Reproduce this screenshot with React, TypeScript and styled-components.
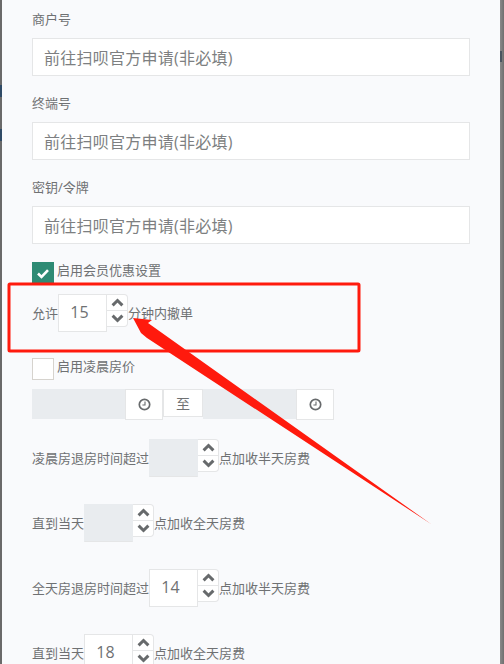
import * as React from "react"
import styled, { createGlobalStyle } from "styled-components"

const GlobalStyle = createGlobalStyle`
  html, body {
    margin: 0;
    height: 664px;
    overflow: hidden;
  }

  body {
    background:
      linear-gradient(#2f4a66, #2f4a66) 0 85px / 2px 12px no-repeat,
      linear-gradient(#2f4a66, #2f4a66) 0 129px / 2px 12px no-repeat,
      linear-gradient(#4a5560, #4a5560) 500px 51px / 2px 11px no-repeat,
      linear-gradient(90deg, #6a6a6a 0 2px, #8a8a8a 500px, #6f6f6f 504px);
    font-family: "Open Sans", "Noto Sans CJK SC", sans-serif;
    color: #6f7173;
  }
`

const Panel = styled.div`
  position: relative;
  box-sizing: border-box;
  width: 498px;
  height: 664px;
  margin-left: 2px;
  padding: 10px 30px 0;
  background: #f9fafc;
  overflow: hidden;
`

const Field = styled.div`
  margin-bottom: 18px;
`

const Label = styled.div`
  font-size: 13px;
  line-height: 18px;
  margin-bottom: 10px;
`

const TextInput = styled.div`
  box-sizing: border-box;
  width: 438px;
  height: 38px;
  padding: 0 11px;
  display: flex;
  align-items: center;
  background: #fff;
  border: 1px solid #e5e6e7;
  font-size: 16px;
  letter-spacing: 0.25px;
  color: #7d7f81;
`

const CheckRow = styled.div<{ $gap: number }>`
  display: flex;
  align-items: flex-start;
  gap: 3px;
  height: 22px;
  margin-bottom: ${(p) => p.$gap}px;
  font-size: 13px;
  line-height: 16px;
`

const CheckBox = styled.div<{ $on?: boolean }>`
  box-sizing: border-box;
  width: 22px;
  height: 22px;
  display: flex;
  align-items: center;
  justify-content: center;
  background: ${(p) => (p.$on ? "#2e8b74" : "#fff")};
  border: 1px solid ${(p) => (p.$on ? "#2e8b74" : "#d6d3ce")};
`

const NumberRow = styled.div<{ $gap: number }>`
  display: flex;
  align-items: flex-start;
  height: 38px;
  margin-bottom: ${(p) => p.$gap}px;
  font-size: 13px;
  line-height: 38px;
  white-space: nowrap;
`

const NumberBox = styled.div<{ $disabled?: boolean }>`
  box-sizing: border-box;
  width: 49px;
  height: 38px;
  background: ${(p) => (p.$disabled ? "#e9ecef" : "#fff")};
  border: 1px solid #e5e6e7;
  border-top-color: ${(p) => (p.$disabled ? "#e9ecef" : "#e5e6e7")};
  border-left-color: ${(p) => (p.$disabled ? "#e9ecef" : "#e5e6e7")};
  border-right-color: ${(p) => (p.$disabled ? "#e9ecef" : "#e5e6e7")};
  text-align: center;
  font-size: 16px;
  line-height: 34px;
  padding-right: 6px;
`

const Spinner = styled.div`
  box-sizing: border-box;
  width: 21px;
  height: 33px;
  display: flex;
  flex-direction: column;
  background: #fff;
  border: 1px solid #e5e6e7;
  border-left: none;
  border-radius: 0 4px 4px 0;
`

const SpinButton = styled.div`
  flex: 1;
  display: flex;
  align-items: center;
  justify-content: center;

  & + & {
    border-top: 1px solid #e5e6e7;
  }
`

const TimeRow = styled.div`
  display: flex;
  align-items: flex-start;
  height: 31px;
  margin-bottom: 19px;
`

const TimeInput = styled.div`
  width: 93px;
  height: 30px;
  background: #e9ecef;
`

const ClockButton = styled.div`
  box-sizing: border-box;
  width: 38px;
  height: 31px;
  display: flex;
  align-items: center;
  justify-content: center;
  background: #fff;
  border: 1px solid #e5e6e7;
`

const ToLabel = styled.div`
  box-sizing: border-box;
  width: 40px;
  height: 28px;
  display: flex;
  align-items: center;
  justify-content: center;
  background: #fff;
  border: 1px solid #e5e6e7;
  font-size: 14px;
`

const Annotation = styled.svg`
  position: absolute;
  left: -2px;
  top: 0;
  pointer-events: none;
`

const Chevron = ({ up }: { up?: boolean }) => (
  <svg width="13" height="9" viewBox="0 0 13 9">
    <path
      d={up ? "M1.6 7.4l4.9-4.9 4.9 4.9" : "M1.6 1.6l4.9 4.9 4.9-4.9"}
      fill="none"
      stroke="#676a6c"
      strokeWidth="3"
    />
  </svg>
)

const Clock = () => (
  <svg width="13" height="13" viewBox="0 0 13 13">
    <circle cx="6.5" cy="6.5" r="5.2" fill="none" stroke="#676a6c" strokeWidth="1.7" />
    <path d="M7 3.4V7H4.4" fill="none" stroke="#676a6c" strokeWidth="1.1" />
  </svg>
)

const NumberInput = ({ value }: { value?: string }) => (
  <>
    <NumberBox $disabled={!value}>{value}</NumberBox>
    <Spinner>
      <SpinButton>
        <Chevron up />
      </SpinButton>
      <SpinButton>
        <Chevron />
      </SpinButton>
    </Spinner>
  </>
)

const placeholder = "前往扫呗官方申请(非必填)"

const App = () => (
  <>
    <GlobalStyle />
    <Panel>
      <Field>
        <Label>商户号</Label>
        <TextInput>{placeholder}</TextInput>
      </Field>
      <Field>
        <Label>终端号</Label>
        <TextInput>{placeholder}</TextInput>
      </Field>
      <Field>
        <Label>密钥/令牌</Label>
        <TextInput>{placeholder}</TextInput>
      </Field>
      <CheckRow $gap={10}>
        <CheckBox $on>
          <svg width="14" height="11" viewBox="0 0 14 11">
            <path d="M2 5.5l3.5 3.5L12 2.2" fill="none" stroke="#fff" strokeWidth="2.6" />
          </svg>
        </CheckBox>
        启用会员优惠设置
      </CheckRow>
      <NumberRow $gap={26}>
        允许
        <NumberInput value="15" />
        分钟内撤单
      </NumberRow>
      <CheckRow $gap={9}>
        <CheckBox />
        启用凌晨房价
      </CheckRow>
      <TimeRow>
        <TimeInput />
        <ClockButton>
          <Clock />
        </ClockButton>
        <ToLabel>至</ToLabel>
        <TimeInput />
        <ClockButton>
          <Clock />
        </ClockButton>
      </TimeRow>
      <NumberRow $gap={27}>
        凌晨房退房时间超过
        <NumberInput />
        点加收半天房费
      </NumberRow>
      <NumberRow $gap={27}>
        直到当天
        <NumberInput />
        点加收全天房费
      </NumberRow>
      <NumberRow $gap={27}>
        全天房退房时间超过
        <NumberInput value="14" />
        点加收半天房费
      </NumberRow>
      <NumberRow $gap={0}>
        直到当天
        <NumberInput value="18" />
        点加收全天房费
      </NumberRow>
      <Annotation width="504" height="664" viewBox="0 0 504 664">
        <rect x="9" y="284" width="350" height="67" rx="1" fill="none" stroke="#ff1a0d" strokeWidth="3" />
        <path d="M133 318L152 320L148 323L431 524L147 338L141 333Z" fill="#ff1a0d" />
      </Annotation>
    </Panel>
  </>
)

export default App
